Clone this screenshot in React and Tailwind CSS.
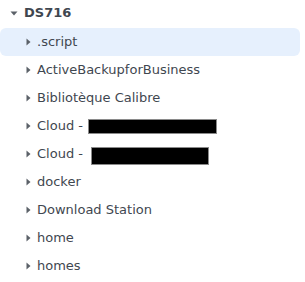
import React from "react";

const Right = () => (
  <svg width="5" height="8" viewBox="0 0 5 8" className="shrink-0">
    <path d="M0.5 0.5 L4.5 4 L0.5 7.5 Z" fill="#5b6168" />
  </svg>
);

const Down = () => (
  <svg width="8" height="5" viewBox="0 0 8 5" className="shrink-0">
    <path d="M0.5 0.5 L7.5 0.5 L4 4.5 Z" fill="#5b6168" />
  </svg>
);

const Row = ({ children, selected }) => (
  <div
    className={
      "flex items-center h-[28px] pl-[26px] mr-[5px] rounded-[6px] " +
      (selected ? "bg-[#e6f0fd]" : "")
    }
  >
    <Right />
    <div className="ml-[6px] flex items-center whitespace-nowrap">{children}</div>
  </div>
);

export default function App() {
  return (
    <div
      className="w-[305px] h-[282px] bg-white text-[13px] text-[#3f4750]"
      style={{ fontFamily: '"DejaVu Sans", Verdana, sans-serif' }}
    >
      <div className="flex items-center h-[28px] pb-[2px] pl-[10px]">
        <Down />
        <span className="ml-[6px] font-bold text-[13px] text-[#3f4750]">DS716</span>
      </div>
      <Row selected>.script</Row>
      <Row>ActiveBackupforBusiness</Row>
      <Row>Bibliotèque Calibre</Row>
      <Row>
        Cloud -
        <span className="ml-[5px] inline-block w-[129px] h-[15px] bg-black border border-[#8a8a8a]" />
      </Row>
      <Row>
        Cloud -
        <span className="ml-[8px] mt-[4px] inline-block w-[118px] h-[18px] bg-black border border-[#8a8a8a]" />
      </Row>
      <Row>docker</Row>
      <Row>Download Station</Row>
      <Row>home</Row>
      <Row>homes</Row>
    </div>
  );
}
